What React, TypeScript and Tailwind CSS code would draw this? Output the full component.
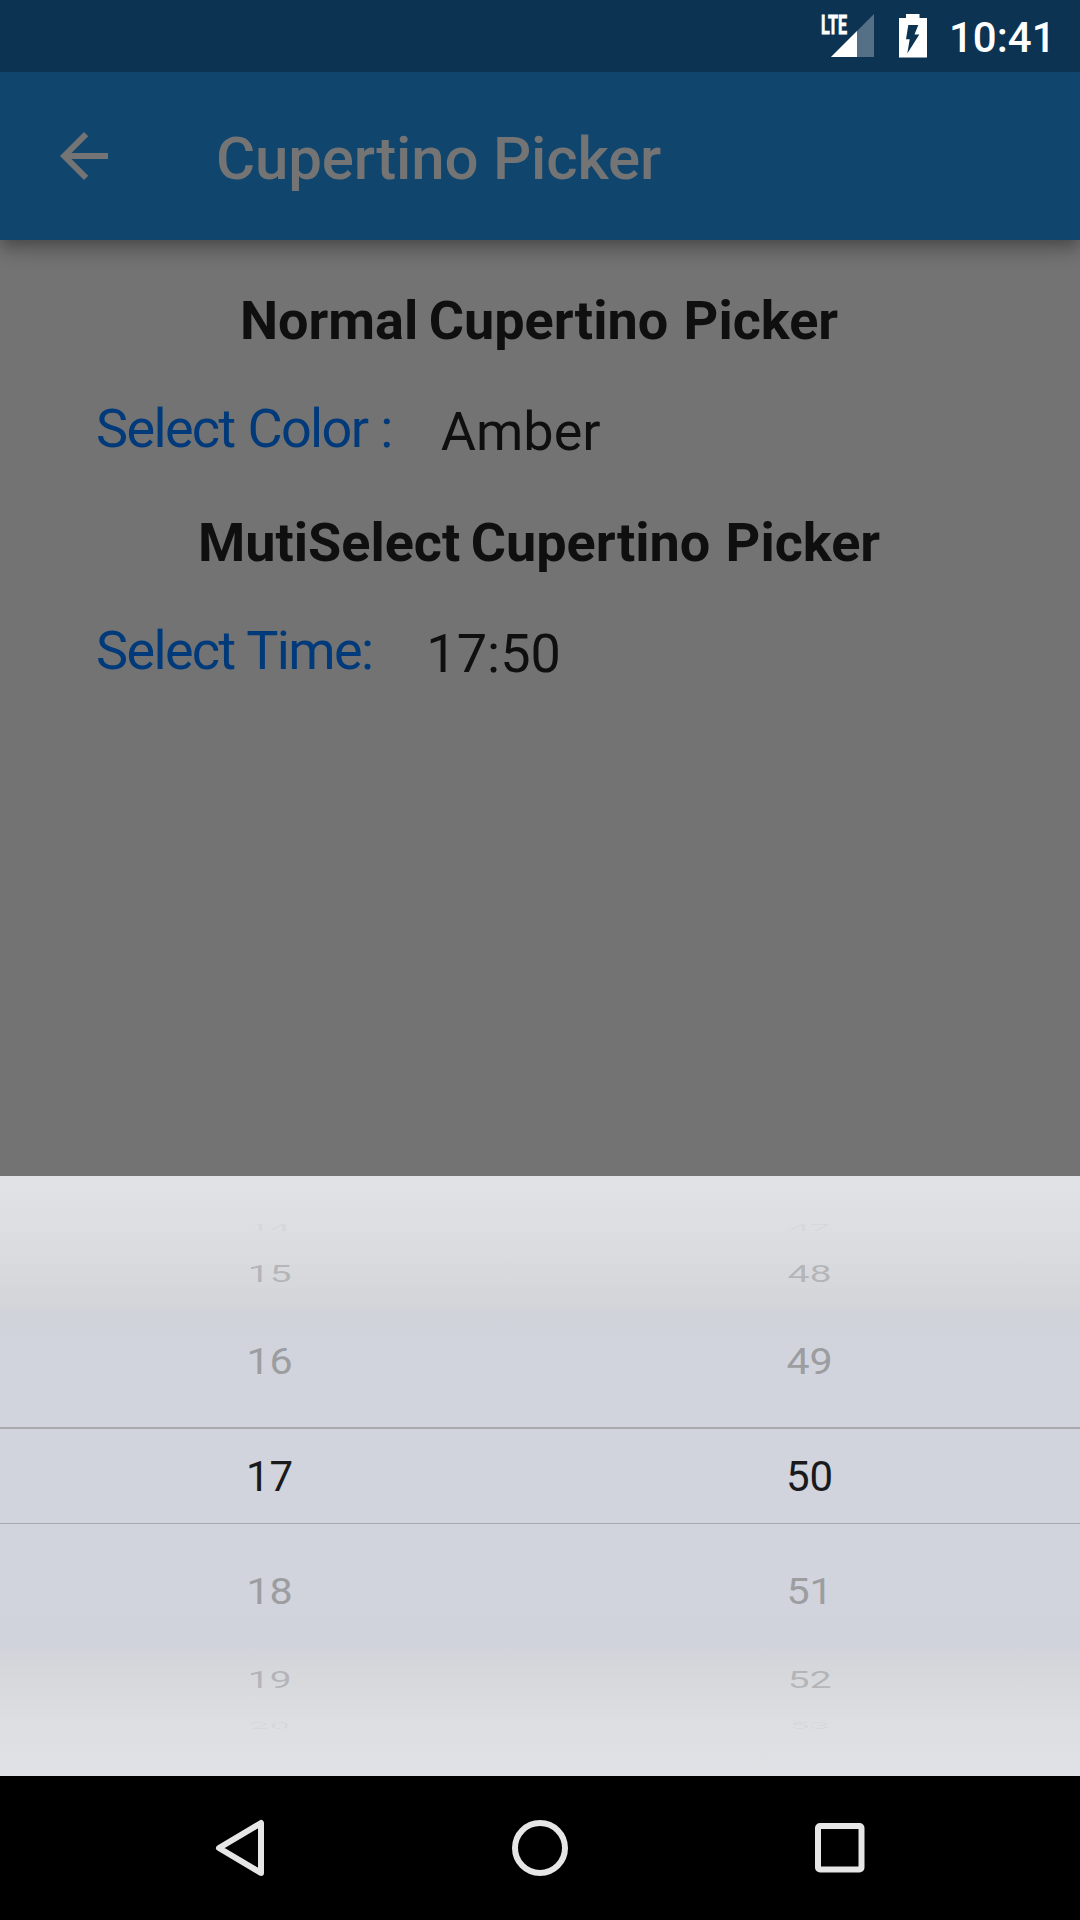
const LEFT = ['14', '15', '16', '17', '18', '19', '20'];
const RIGHT = ['47', '48', '49', '50', '51', '52', '53'];

const ROWS = [
  'h-[50px] scale-x-[0.87] scale-y-[0.23] text-[#1a1a1c]/5',
  'h-[42px] scale-x-[0.94] scale-y-[0.58] text-[#1a1a1c]/20',
  'h-[134px] scale-x-[0.98] scale-y-[0.885] text-[#9c9da0]',
  'h-[96px] text-[#1a1a1c]',
  'h-[134px] scale-x-[0.98] scale-y-[0.885] text-[#9c9da0]',
  'h-[42px] scale-x-[0.94] scale-y-[0.58] text-[#1a1a1c]/20',
  'h-[50px] scale-x-[0.87] scale-y-[0.23] text-[#1a1a1c]/4',
];

function Wheel({ items }: { items: string[] }) {
  return (
    <div className="flex flex-1 flex-col items-center pr-px pt-[27px]">
      {items.map((item, i) => (
        <div key={item} className={`flex shrink-0 items-center text-[42px] leading-none ${ROWS[i]}`}>
          {item}
        </div>
      ))}
    </div>
  );
}

function StatusBar() {
  return (
    <div className="relative z-20 flex h-[72px] items-start bg-[#0c3352] pl-[820px] text-white">
      <div className="relative h-[72px] w-[54px]">
        <svg className="absolute inset-0" width="54" height="72" viewBox="0 0 54 72">
          <path d="M11 57 54 14V57Z" fill="#fff" opacity=".3" />
          <path d="M11 57 37 31V57Z" fill="#fff" />
        </svg>
        <span className="absolute left-[1px] top-[11px] origin-left scale-x-[0.62] text-[26px] font-bold leading-[28px] [-webkit-text-stroke:0.8px_white]">LTE</span>
      </div>
      <svg className="ml-[25px]" width="28" height="72" viewBox="0 0 28 72">
        <path
          fillRule="evenodd"
          fill="#fff"
          d="M7 14H20.500V18H28V57.500H0V18H7ZM9.300 25 7 39.300H10.700L8.300 53.500 20.300 34.500H15.500L19.300 25Z"
        />
      </svg>
      <span className="ml-[22px] pt-[13px] text-[42px] font-medium leading-[50px]">10:41</span>
    </div>
  );
}

function AppBar() {
  return (
    <div className="relative z-10 flex h-[168px] items-center bg-[#10456e] pl-12 text-[#747474] shadow-[0_6px_12px_-3px_rgba(0,0,0,0.2),0_12px_15px_0_rgba(0,0,0,0.14),0_3px_30px_0_rgba(0,0,0,0.12)]">
      <svg width="72" height="72" viewBox="0 0 24 24" fill="currentColor">
        <path d="M20 11H7.830l5.590-5.590L12 4l-8 8 8 8 1.410-1.410L7.830 13H20z" />
      </svg>
      <h1 className="ml-24 pt-[5px] text-[60px] font-medium leading-[70px] tracking-[-0.17px]">Cupertino Picker</h1>
    </div>
  );
}

export default function App() {
  return (
    <div className="flex h-[1920px] w-[1080px] flex-col overflow-hidden bg-[#737373] font-['Roboto',sans-serif]">
      <StatusBar />
      <AppBar />
      <main className="flex h-[936px] flex-col pt-[49px] text-[54px] leading-[64px] text-[#0f0f0f]">
        <h2 className="pr-[2px] text-center font-bold">
          Normal <span className="ml-[-3px] mr-[2px]">Cupertino</span> Picker
        </h2>
        <div className="mt-[44px] flex h-[64px] pl-24">
          <span className="tracking-[-1.65px] text-[#003a7a] [word-spacing:1.2px]">Select Color :</span>
          <span className="ml-[49px] pt-[3px]">Amber</span>
        </div>
        <h2 className="mt-[50px] pr-[2px] text-center font-bold">
          MutiSelect <span className="ml-[-3px] mr-[2px]">Cupertino</span> Picker
        </h2>
        <div className="mt-[44px] flex h-[64px] pl-24">
          <span className="tracking-[-1.65px] text-[#003a7a] [word-spacing:1px]">Select Time:</span>
          <span className="ml-[54px] pt-[3px]">17:50</span>
        </div>
      </main>
      <section className="relative flex h-[600px] bg-[linear-gradient(180deg,#e0e2e6_0%,#dfe0e4_5%,#dddee2_9%,#d4d5d9_21.500%,#d1d3db_22.500%,#d1d4dc_30%,#d1d4dc_70%,#d1d3dc_78%,#d6d7db_82%,#dddee2_91%,#dfe0e4_95%,#e0e1e6_100%)]">
        <Wheel items={LEFT} />
        <Wheel items={RIGHT} />
        <div className="absolute inset-x-0 top-[251px] h-[97px] border-b border-t-2 border-[#a8a9ac]" />
      </section>
      <nav className="flex h-[144px] items-center justify-between bg-black px-[204px]">
        <svg width="72" height="72" viewBox="0 0 72 72" fill="none" stroke="#e6e6e6" strokeWidth="6" strokeLinejoin="round">
          <path d="M57 11V61L15 36Z" />
        </svg>
        <svg width="72" height="72" viewBox="0 0 72 72" fill="none" stroke="#e6e6e6" strokeWidth="6">
          <circle cx="36" cy="36" r="25" />
        </svg>
        <svg width="72" height="72" viewBox="0 0 72 72" fill="none" stroke="#e6e6e6" strokeWidth="6">
          <rect x="14" y="14" width="43.500" height="43.500" rx="2" />
        </svg>
      </nav>
    </div>
  );
}
